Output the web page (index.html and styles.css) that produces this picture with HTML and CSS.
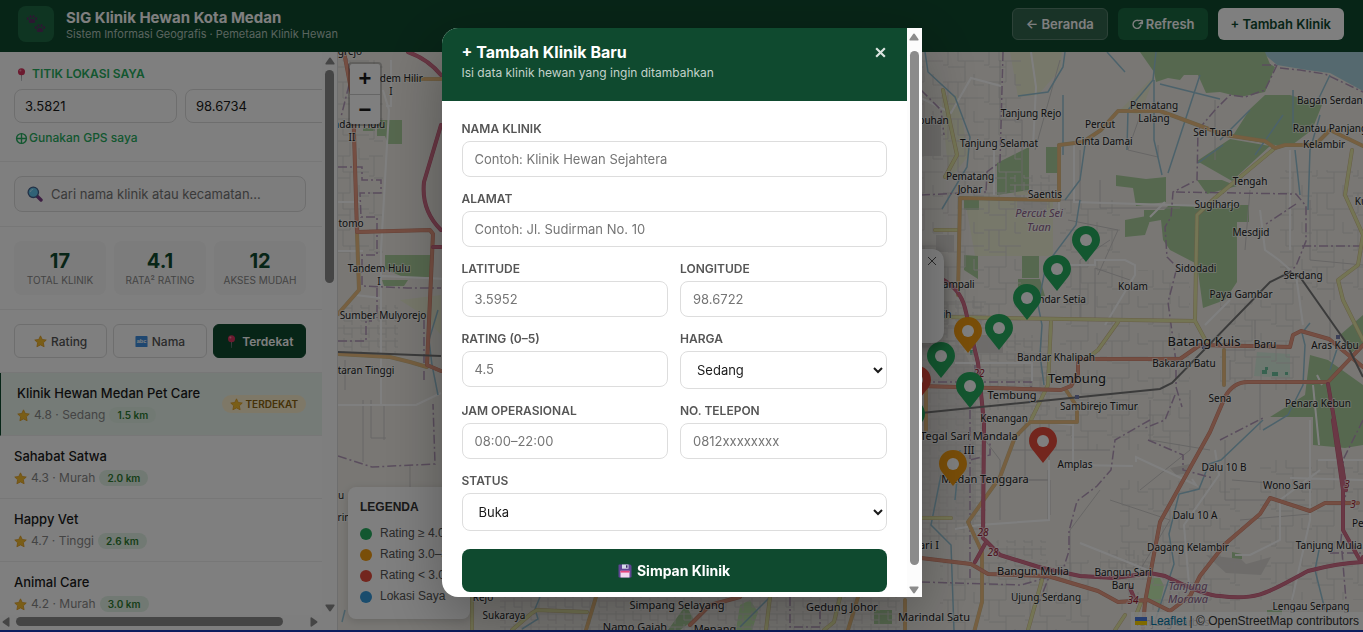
FILE: index.html
```html
<!DOCTYPE html>
<html lang="id">
<head>
<meta charset="utf-8">
<title>SIG Klinik Hewan Kota Medan</title>
<link rel="stylesheet" href="styles.css">
</head>
<body>
<svg class="defs" aria-hidden="true">
  <symbol id="i-pin" viewBox="0 0 12 14"><path d="M5.6 7h.9L6.3 14h-.5z" fill="#8b8f9a"/><circle cx="6" cy="4" r="3.8" fill="#d8345f"/><circle cx="4.8" cy="2.8" r="1.1" fill="#f58aa5"/></symbol>
  <symbol id="i-star" viewBox="0 0 14 14"><path d="M7 .9l1.9 3.9 4.3.6-3.1 3 .8 4.3L7 10.700l-3.900 2 .8-4.300-3.100-3 4.300-.6z" fill="#f5bc2f" stroke="#dd9a1c" stroke-width=".8" stroke-linejoin="round"/></symbol>
  <symbol id="i-search" viewBox="0 0 16 16"><path d="M10 10l4 4" stroke="#7b3f87" stroke-width="3.400" stroke-linecap="round"/><circle cx="6.300" cy="6.300" r="5.200" fill="#63c5ec" stroke="#44618c" stroke-width="1.300"/><path d="M3.400 6a3 3 0 0 1 2.800-2.700" stroke="#b5ebff" fill="none"/></symbol>
  <symbol id="i-paws" viewBox="0 0 20 20"><g id="paw" fill="#553361"><path d="M6 4.800c2 0 3.600 1.700 3.200 3.300-.3 1.200-1.700.9-3.200.9s-2.900.3-3.200-.9C2.400 6.500 4 4.800 6 4.800z"/><ellipse cx="1.800" cy="4.600" rx="1.100" ry="1.500"/><ellipse cx="4.500" cy="2.600" rx="1.100" ry="1.500"/><ellipse cx="7.600" cy="2.600" rx="1.100" ry="1.500"/><ellipse cx="10.200" cy="4.600" rx="1.100" ry="1.500"/></g><use href="#paw" x="8" y="9"/></symbol>
  <symbol id="i-save" viewBox="0 0 14 14"><path d="M.5 1.200Q.5.5 1.200.5h11l1.300 1.300v11q0 .7-.7.7H1.200q-.7 0-.7-.7z" fill="#604494"/><path d="M4 .5h6.500v4.200H4z" fill="#d6d9ea"/><path d="M8 1.200h1.500v2.600H8z" fill="#3b2b61"/><path d="M2.500 6.800h9v6.700h-9z" fill="#f3d9ef"/><path d="M2.500 6.800h9v1.800h-9z" fill="#e8487e"/></symbol>
  <symbol id="i-reload" viewBox="0 0 14 14"><path d="M8.500 3.100a4.300 4.300 0 1 0 2.300 4.200" fill="none" stroke="currentColor" stroke-width="1.500"/><path d="M7.200 6.600h5.800V2.200z" fill="currentColor"/><path d="M6 2.600h6.500" stroke="currentColor" stroke-width="1.300"/></symbol>
  <symbol id="i-globe" viewBox="0 0 14 14"><g fill="none" stroke="currentColor" stroke-width="1.500"><circle cx="7" cy="7" r="5.300"/><path d="M7 1.700v10.600M1.700 7h10.600"/></g></symbol>
  <symbol id="i-close" viewBox="0 0 12 12"><path d="M2 2l8 8M10 2l-8 8" stroke="currentColor"/></symbol>
  <symbol id="i-up" viewBox="0 0 10 8"><path d="M5 .5q.6 0 1 .7l3.500 5q.5 1.300-.7 1.300H1.200Q0 7.500.5 6.200l3.500-5Q4.400.5 5 .5z" fill="#8b8b8b"/></symbol>
  <symbol id="pin" viewBox="0 0 28 36"><path d="M14 0C6 0 0 6 0 14c0 4 2 7 4.500 10L14 36l9.500-12C26 21 28 18 28 14 28 6 22 0 14 0z"/><circle cx="14" cy="14" r="6" fill="#fff"/></symbol>
</svg>

<header class="topbar">
  <div class="logo"><svg class="paws"><use href="#i-paws"/></svg></div>
  <div class="brand">
    <h1>SIG Klinik Hewan Kota Medan</h1>
    <p>Sistem Informasi Geografis · Pemetaan Klinik Hewan</p>
  </div>
  <nav class="actions">
    <a class="btn btn-ghost" href="#beranda">← Beranda</a>
    <button class="btn btn-green" type="button"><svg class="ic"><use href="#i-reload"/></svg>Refresh</button>
    <button class="btn btn-white" type="button">+ Tambah Klinik</button>
  </nav>
</header>

<main class="layout">
  <aside class="sidebar">
    <div class="panel">
      <section class="block location">
        <h2><svg class="ic"><use href="#i-pin"/></svg>TITIK LOKASI SAYA</h2>
        <div class="coords">
          <input type="text" value="3.5821" aria-label="Latitude saya">
          <input type="text" value="98.6734" aria-label="Longitude saya">
        </div>
        <button class="gps" type="button"><svg class="ic"><use href="#i-globe"/></svg>Gunakan GPS saya</button>
      </section>
      <section class="block">
        <label class="search"><svg><use href="#i-search"/></svg><input type="search" placeholder="Cari nama klinik atau kecamatan..." aria-label="Cari klinik"></label>
      </section>
      <section class="block trio">
        <div class="stat"><b>17</b><span>TOTAL KLINIK</span></div>
        <div class="stat"><b>4.1</b><span>RATA² RATING</span></div>
        <div class="stat"><b>12</b><span>AKSES MUDAH</span></div>
      </section>
      <section class="block trio sort">
        <button type="button"><svg class="ic"><use href="#i-star"/></svg>Rating</button>
        <button type="button"><svg class="ic" viewBox="0 0 14 14"><rect x=".5" y="1" width="13" height="12" rx="1" fill="#3f8fe0"/><text x="7" y="9" class="abc">abc</text></svg>Nama</button>
        <button type="button" class="on"><svg class="ic"><use href="#i-pin"/></svg>Terdekat</button>
      </section>
      <ul class="clinics">
        <li class="near"><div><h3>Klinik Hewan Medan Pet Care</h3><p><svg class="ic"><use href="#i-star"/></svg>4.8 · Sedang <span class="km">1.5 km</span></p></div><span class="tag"><svg class="ic"><use href="#i-star"/></svg>TERDEKAT</span></li>
        <li><div><h3>Sahabat Satwa</h3><p><svg class="ic"><use href="#i-star"/></svg>4.3 · Murah <span class="km">2.0 km</span></p></div></li>
        <li><div><h3>Happy Vet</h3><p><svg class="ic"><use href="#i-star"/></svg>4.7 · Tinggi <span class="km">2.6 km</span></p></div></li>
        <li><div><h3>Animal Care</h3><p><svg class="ic"><use href="#i-star"/></svg>4.2 · Murah <span class="km">3.0 km</span></p></div></li>
      </ul>
    </div>
    <div class="vbar side-v"><svg><use href="#i-up"/></svg><i></i><svg class="down"><use href="#i-up"/></svg></div>
    <div class="hbar"><svg class="left"><use href="#i-up"/></svg><i></i><svg class="right"><use href="#i-up"/></svg></div>
  </aside>

  <div class="map">
    <svg class="tiles" viewBox="338 52 1025 578" preserveAspectRatio="xMidYMid slice">
      <defs>
        <pattern id="town" width="41" height="37" patternUnits="userSpaceOnUse"><path d="M0 8h22v-8M15 8v16h26M5 8v20h-5M22 24v13M31 0v11h10M5 30h17" class="lane"/></pattern>
        <pattern id="dense" width="17" height="13" patternUnits="userSpaceOnUse"><path d="M0 3h17M4 0v9M12 3v10M4 9h8" class="lane"/></pattern>
      </defs>
      <rect x="338" y="52" width="1025" height="578" fill="#f2efe9"/>
      <path fill="#aad3df" d="M1262 52l15 13 30 5 23 3 33 18V52z"/>
      <g fill="#eef0d5">
        <path d="M1010 52h52l-2 18-22 25-20 2zM1155 75l-15 40-20-5zM965 200h88v56h-78zM400 300l41-5v40l-18-20zM941 95l16 0 12 60-20 25zM1018 165h10v30h-15zM1202 222h12v58h-8z"/>
      </g>
      <g fill="#add19e">
        <path d="M1140 52l14 20 2 10 12-4 12 2 4-5 14 0 8 18 14-1 20 5 25-5 10-25-5-3-5-12z"/>
        <path d="M1265 95h25l32 10-10 25-20 15-17 0-43-8 18-28zM1230 139l40 7-38 35-35-20zM1197 180h25l15 6-30 8zM997 163l32-16v43l-32 5zM1046 147h12v26h-12zM1116 175l30 4 20-2v25l-30 4-3-18-17-2zM964 198h15v12h-15z"/>
        <path d="M1144 210h20l5-5h80v17h-12v60l-12 18-22 8-6-44-27-14-7-10-2-20-17 3zM1125 220l27-5-7 20-20 2zM964 255l14 1v23l-14-9zM1022 256h17v22h-17zM1018 279l22 0 5 17-27 2z"/>
        <path d="M1310 355l18 5 35 25v60l-18 3-32-3v-28l-43 0 35-22zM377 120h25v24h-14l-3-8h-8zM385 255h48v22l-30 0-18-8zM382 280h26l-4 6h-20zM363 128h12v3h-12zM874 610h18v14h-18zM686 605l8 15-14 10h-12z"/>
        <path d="M1340 335l23-20v30l-12 8zM1267 610h15v5h-15zM1232 552l10 2v5h-10z"/>
      </g>
      <path fill="#c8f0b4" d="M1148 578l12 0 4 8-4 18-12-2zM740 605l10-5 8 12-6 18h-16z"/>
      <path fill="#c9f0dc" opacity=".6" d="M1257 352l33 2 0 24-36-2z"/><path fill="#6fc5a0" d="M1262 370h5v4h-5zM1272 372h6v4h-6zM1285 372h3v3h-3zM1265 367h3v3h-3zM970 350h4v5h-4z"/>
      <path fill="#dcd9d5" d="M1206 555l35 4 5 5 25-7-10 18-35-2zM921 118l20 4v34h-20zM936 235h18v17h-18zM975 335l28 0v18h-25zM1170 468l20-4 0 9-14 2z"/>
      <path fill="#e6e3df" d="M921 345h40l15 30v145h-55zM1017 200h30v14h-30z"/>
      <path fill="url(#dense)" d="M921 300h65v240h-65zM975 335h75v75h-75zM1010 175h50v35h-50zM996 540h50v20h-50zM1100 550h50v30h-50zM500 597h400v33H500zM338 305h60v50h-60z"/>
      <path fill="url(#town)" d="M921 52h100v300h-100zM1060 200h60v150h-60zM1100 270h90v100h-90zM1220 300h80v90h-80zM1120 480h120v130h-120zM1030 400h160v50h-160zM1260 460h103v140h-103zM338 60h45v200h-45zM940 560h150v70h-150zM1280 170h83v130h-83zM1010 370h180v30h-180z"/>
      <g class="street">
        <path d="M1000 60v60h22v70M1080 150v50l-40 0M1100 180v28h80M1142 110l-14 40 30 7v-12M1060 60l-25 90M1215 100v60M1068 220l50 10-20 45M1110 240l-30 20v60M1130 280l-35-12v50M1025 420v60h24v-60M1010 450h100M1150 400v40l60 10M1225 440v60l80 0M1190 390v60l-50 40M1100 490l-30 40v50M1110 500l60 20-30 50M1232 480l50 4M1240 520l70-6M1260 380v50M1330 300v60M1310 200v60l53 5M1250 190l-5 60M363 400v62M371 400l0 38h15M384 405v35M410 465v25M345 360v30M985 440l15 20v60M1000 480h50v35M1048 470v50M1230 360v20M1255 320v30h-30"/>
      </g>
      <g class="minor">
        <path d="M1031 52l5 35-3 60M994 145v50M921 98l30 15 20-35 30 8M1074 142v60l165 5M1165 202l-15 15M1059 210v-20M1090 265h5v-5h30l10 5v10l-30 50M1058 265h35M994 363h38v18M955 363h40M1290 150l0 100M1260 210l5 40 14 10M1279 260l17 15 7 50M1205 325l25-25M1049 460v60l-70 5-24 4M1136 462l0-5 60 28-4-6M1080 543l80 32M1320 470l-40 30v40l-30 15h-15M1290 478l73 2M1310 420v100l-18 80M1215 450l4 25-35 50 5 60M1028 420l45 5v40l60 1M383 90l6 20-8 140v154M338 405h78l25-12M338 251h25M338 202h22M382 276l65 3M355 295l26 3v45M386 106h5V60M1317 375l5 10M1313 385l6 60M1363 460h-45"/>
      </g>
      <g class="river">
        <path d="M925 52l3 20 27 25 15 40-3 30-25 42M1065 52l-2 15-15 25-30 4M1107 52l18 20M1063 95l0 60M1156 52l-3 28-25 30-1 40M1160 84l60 15M1154 80l0 60 8 35M1200 75l-32 98M1085 145l-5 35-15 20M1080 200l-4 25-30 40-8 40 4 20-2 30 4 30M1223 145l-25 18M1250 110l-30 30M1283 115l-28 40M1320 115l-10 35-2 60M1295 150l5 45M1330 75l-12 25M1310 323l-8 10 3 12-2 40-15 30-25 15M1263 420l-42 40-12 4-10 25-20 5-10 40 5 30-20 60M1320 545l-5 25 10 40M960 450l-5 50M941 475l-10 50 20 20 3 85M1293 90l0 40M438 310l-9 30 3 25 6 30M540 597l-5 12 3 10-16 10M1340 340l-10 30M345 610l-3 12M770 597l-30 30"/>
      </g>
      <g class="border">
        <path d="M1003 52l-3 110-13 10-1 20M921 90l20 20 3 25M921 195l65-3M1262 65l15 0M1277 65l-12 25-20 7-15-2-15 15-17 20-1 50-24 12-2 25-6 10 2 30 10 10-5 20-4 15 8 60 0 25 6 20M1280 68l20 2 25 4 38 18M1176 192l120 2 10 12v35l-10 25-13 12M1296 204l-30 20M1302 246h61M1150 420l-35 20-4 30-14 16-20 15-8 30 0 20-8 25M1148 440l35 15v15l30 8M1220 440l43-22M921 582l100 3 28-8-10 25M921 382h110l0 6M975 365l0 30M970 410v50l20-5v-20h30M970 450v130M1175 395l-10 25-20 8M1363 420l-20 40 3 30-5 50 5 60M1330 553h33"/>
        <path d="M338 167h24v13h19v13h-21l1 24h16v38h-15v31l45 2h34M377 288v30M338 341h28v-20h6M338 456l34 11 63-3-2-60M424 320v60M345 52l6 25-10 40"/>
        <path d="M790 597v30h30v-20h20"/>
      </g>
      <g class="road case"><path id="y1" d="M945 317l250 4 12 22M1195 320l2-105 18-17 60-50M943 90l14 65-12 22M1118 322l-20 28-13 10M1051 322l-3 63-17 35M1352 150l-7 45 18 40-5 30-20 15 5 20 20 40M472 597v33M512 630l20-17 5-3 50 2M770 597l-4 33M840 597l-6 25-10 8M1042 580l-14 50M1125 615l-10 15M1142 600l-6 15M935 230h24M921 518h30"/></g>
      <g class="road yellow"><use href="#y1"/></g>
      <g class="road case"><path id="o1" d="M958 295l2-97 99 2V145l24-3 18-12 17-19h42l65 24 40 6 10 7 10-3h30l15-15 33 16M1224 350v35M1066 390l11 17v15h-47l-15 15-15 40-32 45 14 30v50l-10 38M357 232l2 58-21 24M338 354l52 3 20 5 17 5M408 79h33M596 597l-10 33M858 597l-10 33M905 600v30M926 430l0-50"/></g>
      <g class="road orange"><use href="#o1"/></g>
      <g class="road redcase"><path id="r1" d="M921 386l140 4 10-4 7-12v-15h102l20-14 90 2 3-12 8-4 28 8 34 28M1363 345l-35 37h-80q-15 0-23 15l-15 35-50 90-15 80-2 26M921 558l50 6 17 10 60 2 50 15 20 11 30-2 22 11 20-15 10-20 25-32 35-30 10-16 40 13 15-8h33M344 52l9 48 4 132 73-2 3 4-6 131 14 6M690 625l20-20 30-8"/></g>
      <g class="road red"><use href="#r1"/></g>
      <g class="road motorcase"><path id="m1" d="M940 278q20 10 25 30l13 55 6 60-1 115 17 17 42 13 38 8 35 2 35-5 15 3q40 20 55 20c40 5 50-5 88-25q30-8 55-9M1333 420l10 70 0 40 18 32M1363 562v-5M975 562l10-18M1328 384l8 46 10 60M1130 588l5 12M408 52q20 7 33 23M441 125l-17 57q-3 28 17 48M433 247h8"/></g>
      <g class="road motor"><use href="#m1"/></g>
      <path class="rail" d="M921 413l239-24 12-6 98-101 20-10 10 5 45 64 18 36M338 352l103 4"/>
      <path fill="#7981b0" d="M1202 345h4v4h-4zM1075 395h4v4h-4zM1336 335h4v4h-4z"/>
      <g class="names">
        <text x="1031" y="117">Tanjung Rejo</text><text x="1154" y="109">Pematang</text><text x="1154" y="122">Lalang</text><text x="1100" y="128">Percut</text><text x="1104" y="145">Cinta Damai</text><text x="999" y="147">Tanjung Selamat</text><text x="1213" y="136">Sei Tuan</text>
        <text x="1333" y="104">Bagan Serdang</text><text x="1330" y="132">Rantau Panjang</text><text x="1324" y="148">Kelambir</text><text x="970" y="180">Pematang</text><text x="970" y="193">Johar</text><text x="1045" y="198">Saentis</text><text x="1250" y="185">Tengah</text><text x="1217" y="208">Sugiharjo</text><text x="1251" y="236">Mesdjid</text><text x="1196" y="272">Sidodadi</text><text x="1303" y="279">Serdang</text><text x="1241" y="298">Paya Gambar</text><text x="1133" y="290">Kolam</text><text x="1056" y="303">Bandar Setia</text><text x="956" y="288">Sampali</text><text x="1056" y="361">Bandar Khalipah</text><text x="1184" y="367">Bakaran Batu</text><text x="1265" y="348">Baru</text><text x="1335" y="349">Aras Kabu</text>
        <text x="1204" y="346" class="big">Batang Kuis</text><text x="1077" y="383" class="big">Tembung</text><text x="1012" y="399" class="mid">Tembung</text><text x="1099" y="410">Sambirejo Timur</text><text x="1004" y="422">Kenangan</text><text x="1220" y="402">Sena</text><text x="1318" y="407">Penara Kebun</text>
        <text x="969" y="440" class="mid">Tegal Sari Mandala</text><text x="969" y="454" class="mid">III</text><text x="985" y="483" class="mid">Medan Tenggara</text><text x="1075" y="468">Amplas</text><text x="1224" y="471">Dalu 10 B</text><text x="1287" y="489">Wono Sari</text><text x="1195" y="519">Dalu 10 A</text><text x="1188" y="551">Dagang Kelambir</text><text x="1329" y="549">Tanjung Mulia</text><text x="1033" y="575" class="mid">Bangun Mulia</text><text x="1123" y="576">Bangun Sari</text><text x="1123" y="589">Baru</text><text x="1046" y="601">Ujung Serdang</text><text x="1311" y="610">Lengau Serpang</text>
        <text x="1363" y="527">Perb</text><text x="1361" y="205">Ku</text><text x="926" y="549" class="mid">Sari I</text><text x="934" y="621" class="mid">Marindal Satu</text><text x="842" y="611" class="mid">Gedung Johor</text><text x="677" y="609" class="mid">Simpang Selayang</text><text x="504" y="619">Sukaraya</text><text x="483" y="601">Rejo</text><text x="635" y="631" class="mid">Namo Gajah</text><text x="715" y="633" class="mid">Menang</text><text x="928" y="124">Labuhan</text><text x="947" y="318">ih</text><text x="1172" y="626">Tanjung Garbus</text>
        <text x="350" y="55">grejo</text><text x="393" y="82">Tandem Hilir</text><text x="391" y="95">I</text><text x="354" y="128">Tandam Hulu</text><text x="352" y="141">II</text><text x="351" y="227">tomo</text><text x="379" y="272">Tandem Hulu</text><text x="379" y="285">I</text><text x="383" y="319">Sumber Mulyorejo</text><text x="366" y="374">taran Tinggi</text><text x="341" y="499">u</text><text x="344" y="521">rin</text>
        <g class="area"><text x="1039" y="217">Percut Sei</text><text x="1039" y="231">Tuan</text><text x="1188" y="590">Tanjung</text><text x="1188" y="603">Morawa</text></g>
        <g class="ref"><text x="979" y="377">22</text><text x="983" y="536">28</text><text x="993" y="556">28</text><text x="1133" y="604">34</text><text x="1347" y="488">3</text><text x="1353" y="508">3</text></g>
      </g>
      <g fill="#27ae60"><use href="#pin" x="1072" y="226" width="28" height="36"/><use href="#pin" x="1043" y="255" width="28" height="36"/><use href="#pin" x="1013" y="284" width="28" height="36"/><use href="#pin" x="985" y="314" width="28" height="36"/><use href="#pin" x="897" y="400" width="28" height="36"/></g>
      <use href="#pin" x="954" y="317" width="28" height="36" fill="#f39c12"/>
      <use href="#pin" x="903" y="366" width="28" height="36" fill="#e74c3c"/>
      <g fill="#27ae60"><use href="#pin" x="927" y="342" width="28" height="36"/><use href="#pin" x="956" y="372" width="28" height="36"/></g>
      <use href="#pin" x="1029" y="427" width="28" height="36" fill="#e74c3c"/>
      <use href="#pin" x="939" y="450" width="28" height="36" fill="#f39c12"/>
    </svg>
    <div class="zoomer"><button type="button" aria-label="Perbesar">+</button><button type="button" aria-label="Perkecil">−</button></div>
    <div class="popup"><button type="button" aria-label="Tutup info"><svg><use href="#i-close"/></svg></button></div>
    <div class="legend">
      <h4>LEGENDA</h4>
      <ul><li class="g">Rating ≥ 4.0</li><li class="o">Rating 3.0–3.9</li><li class="r">Rating &lt; 3.0</li><li class="b">Lokasi Saya</li></ul>
    </div>
    <div class="credit"><svg viewBox="0 0 12 8"><path fill="#4C7BE1" d="M0 0h12v4H0z"/><path fill="#FFD500" d="M0 4h12v4H0z"/></svg> <a href="#leaflet">Leaflet</a> | © OpenStreetMap contributors</div>
  </div>
</main>
<div class="edge"></div>

<div class="overlay">
  <div class="modal" role="dialog" aria-labelledby="modal-title">
    <div class="modal-main">
      <div class="modal-head">
        <div><h2 id="modal-title">+ Tambah Klinik Baru</h2><p>Isi data klinik hewan yang ingin ditambahkan</p></div>
        <button type="button" aria-label="Tutup"><svg><use href="#i-close"/></svg></button>
      </div>
      <form class="form">
        <div class="field wide"><label for="nama">NAMA KLINIK</label><input id="nama" type="text" placeholder="Contoh: Klinik Hewan Sejahtera"></div>
        <div class="field wide"><label for="alamat">ALAMAT</label><input id="alamat" type="text" placeholder="Contoh: Jl. Sudirman No. 10"></div>
        <div class="field"><label for="lat">LATITUDE</label><input id="lat" type="text" placeholder="3.5952"></div>
        <div class="field"><label for="lng">LONGITUDE</label><input id="lng" type="text" placeholder="98.6722"></div>
        <div class="field"><label for="rating">RATING (0–5)</label><input id="rating" type="text" placeholder="4.5"></div>
        <div class="field"><label for="harga">HARGA</label><select id="harga"><option>Sedang</option><option>Murah</option><option>Tinggi</option></select></div>
        <div class="field"><label for="jam">JAM OPERASIONAL</label><input id="jam" type="text" placeholder="08:00–22:00"></div>
        <div class="field"><label for="telp">NO. TELEPON</label><input id="telp" type="text" placeholder="0812xxxxxxxx"></div>
        <div class="field wide"><label for="status">STATUS</label><select id="status"><option>Buka</option><option>Tutup</option></select></div>
        <button class="save wide" type="submit"><svg><use href="#i-save"/></svg>Simpan Klinik</button>
      </form>
    </div>
    <div class="vbar"><svg><use href="#i-up"/></svg><i></i><svg class="down"><use href="#i-up"/></svg></div>
  </div>
</div>
</body>
</html>
```
FILE: styles.css
```css
* { box-sizing: border-box; margin: 0; padding: 0; }
body { display: flex; flex-direction: column; height: 100vh; overflow: hidden; font-family: Inter, sans-serif; color: #1a1a1a; background: #fff; }
button, input, select { font: inherit; color: inherit; }
button { border: 0; background: none; }
ul { list-style: none; }
svg { flex: none; }
.defs { position: absolute; width: 0; height: 0; }
.ic { width: 13px; height: 13px; }

.topbar { display: flex; align-items: center; height: 52px; flex: none; padding: 0 19px 4px 18px; background: #0f4a2f; color: #fff; }
.logo { display: grid; place-items: center; width: 36px; height: 36px; border-radius: 8px; background: #1f6b45; }
.paws { width: 20px; height: 20px; }
.brand { margin-left: 12px; }
.brand h1 { font-size: 15px; line-height: 20px; font-weight: 700; }
.brand p { font-size: 11px; line-height: 12px; color: #b4c8be; }
.actions { display: flex; gap: 10px; margin-left: auto; }
.btn { display: flex; align-items: center; gap: 2px; height: 32px; padding: 0 13px; border-radius: 6px; font-size: 13px; font-weight: 600; text-decoration: none; color: #fff; white-space: nowrap; }
.btn-ghost { background: #33664f; border: 1px solid #5a8571; }
.btn-green { background: #1b6b43; }
.btn-white { background: #fff; color: #0f4a2f; }

.layout { display: flex; flex: 1; min-height: 0; }
.sidebar { display: grid; grid-template: minmax(0, 1fr) 15px / 322px 15px; width: 338px; border-right: 1px solid #ddd; background: #fcfcfc; flex: none; }
.panel { overflow: hidden; background: #fff; }
.block { padding: 14px 16px 14px 14px; border-bottom: 1px solid #eee; }
.location h2 { display: flex; align-items: center; gap: 4px; font-size: 12px; line-height: 16px; font-weight: 600; color: #27ae60; }
.location .ic { margin-left: 1px; }
.coords { display: flex; gap: 8px; margin: 7px 0 6px; }
.coords input { flex: none; width: 163px; height: 34px; padding: 0 10px; border: 1px solid #ddd; border-radius: 8px; font-size: 13px; background: #fff; }
.gps { display: flex; align-items: center; gap: 1px; font-size: 12px; line-height: 18px; font-weight: 500; color: #27ae60; }
.search { display: flex; align-items: center; gap: 8px; height: 36px; padding: 0 12px; border: 1px solid #ddd; border-radius: 8px; background: #fafafa; }
.search svg { width: 16px; height: 16px; }
.search input { flex: 1; min-width: 0; border: 0; background: none; font-size: 13px; }
::placeholder { color: #757575; opacity: 1; }
.trio { display: grid; grid-template-columns: repeat(3, 1fr); gap: 8px; }
.stat { display: flex; flex-direction: column; align-items: center; padding: 8px 0; border-radius: 8px; background: #f8f8f8; }
.stat b { font-size: 20px; line-height: 24px; color: #0f4a2f; }
.stat span { font-size: 10px; line-height: 14px; color: #888; white-space: nowrap; }
.sort { gap: 6px; }
.sort button { display: flex; align-items: center; justify-content: center; gap: 4px; height: 34px; border: 1px solid #ddd; border-radius: 6px; font-size: 12px; font-weight: 500; color: #555; }
.sort .on { background: #0f4a2f; border-color: #0f4a2f; color: #fff; font-weight: 600; }
.abc { font: 700 6px "Liberation Sans", sans-serif; text-anchor: middle; fill: #fff; }
.clinics li { display: flex; align-items: center; justify-content: space-between; padding: 10px 16px 10px 14px; border-bottom: 1px solid #eee; }
.clinics .near { border-left: 1px solid #0f4a2f; padding-left: 16px; background: #eaf6ef; }
.clinics h3 { font-size: 13px; line-height: 20px; font-weight: 500; white-space: nowrap; }
.clinics p { display: flex; align-items: center; gap: 4px; margin-top: 2px; font-size: 12px; line-height: 20px; color: #888; }
.km { padding: 0 8px; border-radius: 8px; background: #e3f3e6; color: #2e7d32; font-size: 10px; line-height: 16px; font-weight: 600; }
.tag { display: flex; align-items: center; gap: 3px; padding: 0 8px; border-radius: 9px; background: #fdf0cf; color: #8a6410; font-size: 10px; line-height: 18px; font-weight: 600; }

.vbar { display: flex; flex-direction: column; align-items: center; width: 15px; padding: 5px 0 3px; background: #fcfcfc; }
.vbar svg, .hbar svg { width: 10px; height: 8px; }
.vbar i { width: 9px; margin: 10px 0 auto; height: 514px; border-radius: 5px; background: #8b8b8b; }
.side-v i { height: 213px; margin-top: 5px; }
.down { transform: rotate(180deg); }
.hbar { display: flex; align-items: center; justify-content: space-between; grid-column: 1; padding: 0 3px 2px 1px; }
.hbar i { width: 267px; height: 9px; margin: 0 auto 0 5px; border-radius: 5px; background: #8b8b8b; }
.left { transform: rotate(-90deg); }
.right { transform: rotate(90deg); }

.map { position: relative; flex: 1; min-width: 0; overflow: hidden; }
.tiles { display: block; width: 100%; height: 100%; }
.lane { fill: none; stroke: #dcd9d6; stroke-width: 1; }
.street { fill: none; stroke: #cfcccb; stroke-width: 1; }
.minor { fill: none; stroke: #fff; stroke-width: 2; }
.river { fill: none; stroke: #98c4d6; stroke-width: 1.5; }
.border { fill: none; stroke: #b59bbb; stroke-width: 1.5; stroke-dasharray: 9 3 2 3; }
.road { fill: none; stroke-linejoin: round; stroke-linecap: round; }
.case { stroke: #d0bd8c; stroke-width: 4; }
.yellow { stroke: #e8eaa8; stroke-width: 3; }
.orange { stroke: #efbf80; stroke-width: 3; }
.redcase { stroke: #cf8570; stroke-width: 4; }
.red { stroke: #ea9c84; stroke-width: 3; }
.motorcase { stroke: #c45c7a; stroke-width: 4; }
.motor { stroke: #d4708a; stroke-width: 3; }
.rail { fill: none; stroke: #777; stroke-width: 2; }
.names { font: 10px "Noto Sans", sans-serif; text-anchor: middle; fill: #222; stroke: rgba(255, 255, 255, .6); stroke-width: 2px; paint-order: stroke; stroke-linejoin: round; }
.mid { font-size: 11px; }
.big { font-size: 13px; }
.area { font-size: 11px; font-style: italic; fill: #8d618b; }
.ref { font-style: italic; fill: #9b2033; }
.zoomer { position: absolute; top: 10px; left: 10px; width: 34px; border: 2px solid rgba(0, 0, 0, .2); border-radius: 4px; background: #fff; background-clip: padding-box; }
.zoomer button { display: block; width: 30px; height: 30px; font: 700 22px/30px "Liberation Sans", sans-serif; }
.zoomer button + button { border-top: 1px solid #ccc; line-height: 28px; }
.popup { position: absolute; top: 34%; right: 419px; display: flex; justify-content: flex-end; align-items: flex-start; width: 280px; height: 94px; padding: 6px; border-radius: 12px; background: #fff; box-shadow: 0 3px 14px rgba(0, 0, 0, .4); }
.popup svg { display: block; width: 12px; height: 12px; color: #555; }
.legend { position: absolute; left: 10px; bottom: 11px; width: 122px; padding: 12px; border-radius: 8px; background: #fff; font: 12px/21px "Liberation Sans", sans-serif; color: #555; box-shadow: 0 2px 8px rgba(0, 0, 0, .15); }
.legend h4 { margin-bottom: 8px; font-size: 12px; line-height: 16px; color: #333; }
.legend li { display: flex; align-items: center; gap: 8px; white-space: nowrap; }
.legend li::before { content: ""; width: 12px; height: 12px; border-radius: 50%; background: var(--dot); }
.g { --dot: #27ae60; }
.o { --dot: #f39c12; }
.r { --dot: #e74c3c; }
.b { --dot: #3498db; }
.credit { position: absolute; right: 0; bottom: 0; padding: 0 4px; background: rgba(255, 255, 255, .8); font: 12px/18px "Liberation Sans", sans-serif; color: #333; white-space: nowrap; }
.credit svg { width: 12px; height: 8px; }
.credit a { color: #0078a8; text-decoration: none; }
.edge { height: 2px; flex: none; background: #0d1c5e; }

.overlay { position: fixed; inset: 0 0 2px; display: flex; justify-content: center; align-items: flex-start; padding-top: 28px; background: rgba(0, 0, 0, .5); }
.modal { display: flex; width: 480px; max-height: 90vh; overflow: hidden; border-radius: 16px 0 0 16px; background: #fff; box-shadow: 0 20px 60px rgba(0, 0, 0, .3); }
.modal-main { flex: 1; min-width: 0; }
.modal-head { display: flex; justify-content: space-between; align-items: flex-start; height: 73px; padding: 14px 20px; background: #0f4a2f; color: #fff; }
.modal-head h2 { font-size: 16px; line-height: 20px; font-weight: 700; }
.modal-head p { margin-top: 3px; font-size: 12px; line-height: 16px; color: #c3d2cb; }
.modal-head button { padding: 4px 0; color: #dbe4e0; }
.modal-head svg { display: block; width: 13px; height: 13px; stroke-width: 2; }
.form { display: grid; grid-template-columns: 1fr 1fr; gap: 14px 12px; align-items: start; padding: 20px; }
.wide { grid-column: 1 / -1; }
.field label { display: block; margin-bottom: 5px; font-size: 12px; line-height: 15px; font-weight: 600; color: #555; }
.field input, .field select { display: block; width: 100%; height: 36px; padding: 0 12px; border: 1px solid #ddd; border-radius: 8px; background: #fff; font-size: 13px; }
.field select { height: 38px; }
.save { display: flex; align-items: center; justify-content: center; gap: 5px; height: 43px; margin-top: 4px; border-radius: 8px; background: #0f4a2f; color: #fff; font-size: 14px; font-weight: 700; }
.save svg { width: 14px; height: 14px; }
```
